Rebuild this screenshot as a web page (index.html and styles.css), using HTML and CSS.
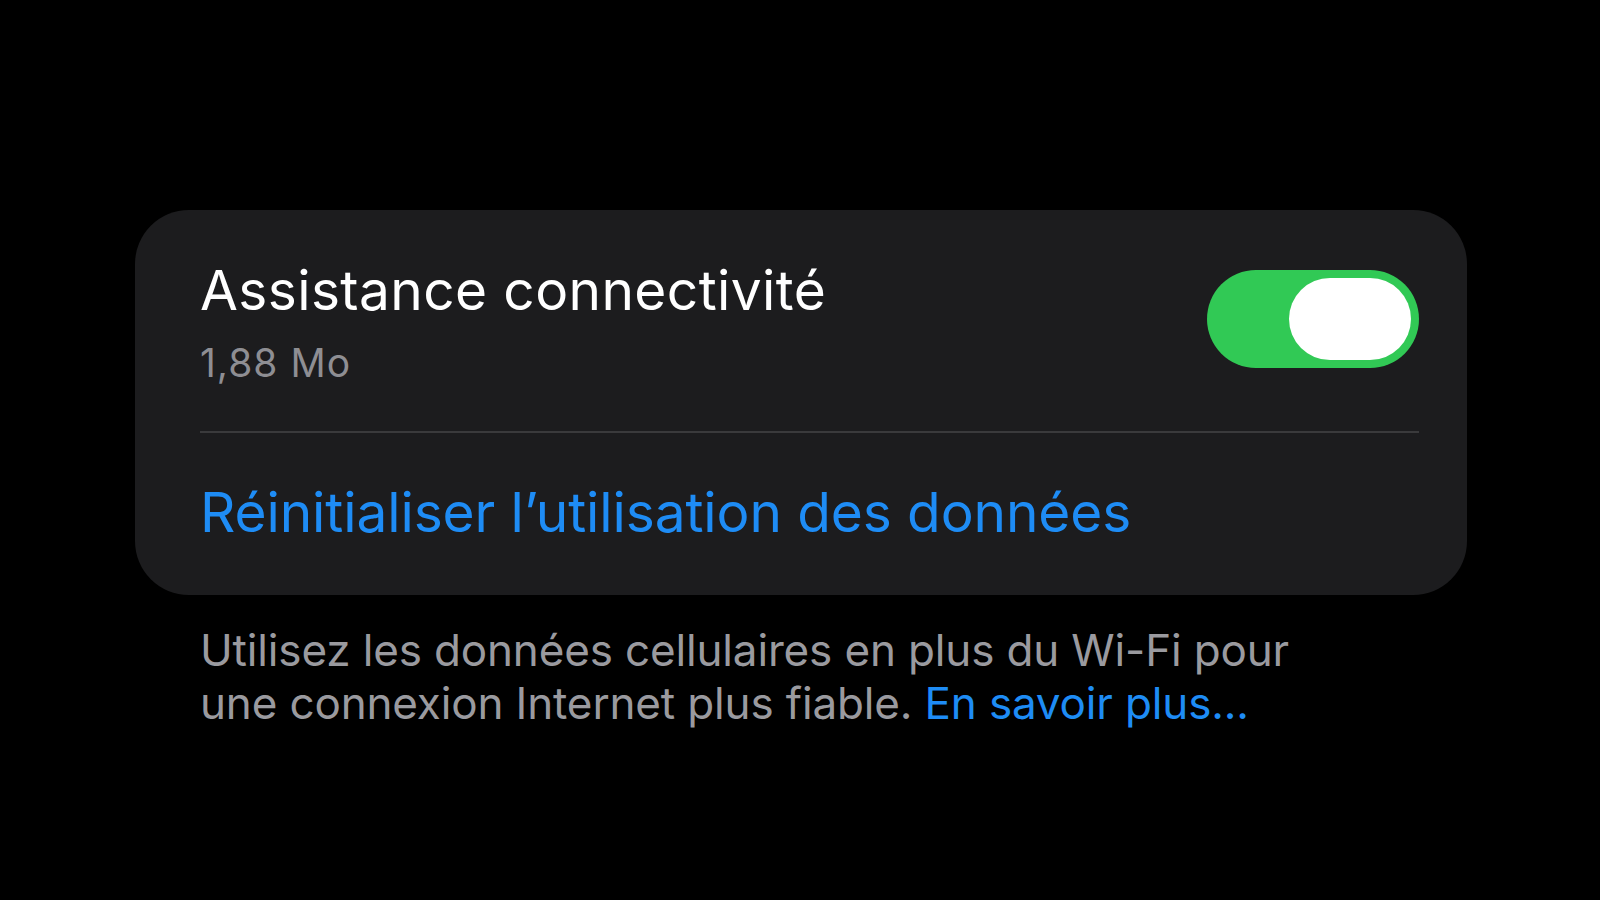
FILE: index.html
```html
<!DOCTYPE html>
<html lang="fr">
<head>
<meta charset="utf-8">
<title>Assistance connectivité</title>
<link rel="stylesheet" href="styles.css">
</head>
<body>
<main class="page">
  <section class="card">
    <div class="row-top">
      <div class="labels">
        <div class="title">Assistance connectivité</div>
        <div class="subtitle">1,88 Mo</div>
      </div>
      <div class="toggle" role="switch" aria-checked="true">
        <div class="knob"></div>
      </div>
    </div>
    <div class="divider"></div>
    <div class="row-link">
      <span class="link">Réinitialiser l’utilisation des données</span>
    </div>
  </section>
  <p class="footer">Utilisez les données cellulaires en plus du Wi-Fi pour<br>une connexion Internet plus fiable. <span class="footer-link">En savoir plus...</span></p>
</main>
</body>
</html>
```

FILE: styles.css
```css
html, body {
  margin: 0;
  padding: 0;
  background: #000;
  height: 100%;
}
body {
  font-family: Inter, "Noto Sans", "Liberation Sans", sans-serif;
  overflow: hidden;
}
.page {
  padding-top: 210px;
  padding-left: 135px;
  width: 1332px;
}
.card {
  background: #1c1c1e;
  border-radius: 54px;
  height: 385px;
  box-sizing: border-box;
  padding: 0 48px 0 65px;
  display: flex;
  flex-direction: column;
}
.row-top {
  display: flex;
  justify-content: space-between;
  align-items: flex-start;
  padding-top: 47px;
  padding-bottom: 45px;
}
.title {
  color: #fff;
  font-size: 55px;
  line-height: 66px;
  font-weight: 400;
  letter-spacing: 0.4px;
}
.subtitle {
  color: #8e8e93;
  font-size: 39px;
  line-height: 46px;
  margin-top: 17px;
  letter-spacing: 1px;
}
.toggle {
  width: 212px;
  height: 98px;
  margin-top: 13px;
  border-radius: 49px;
  background: #31c955;
  display: flex;
  justify-content: flex-end;
  align-items: center;
  padding-right: 8px;
  box-sizing: border-box;
}
.knob {
  width: 122px;
  height: 82px;
  border-radius: 41px;
  background: #fff;
}
.divider {
  height: 2px;
  background: #3a3a3c;
}
.row-link {
  padding-top: 46px;
}
.link {
  color: #1e8cf5;
  font-size: 55px;
  line-height: 66px;
  letter-spacing: -0.1px;
}
.footer {
  margin: 29px 0 0 0;
  padding-left: 65px;
  color: #9a9a9f;
  font-size: 44px;
  line-height: 53px;
  letter-spacing: -0.15px;
}
.footer-link {
  color: #1e8cf5;
}
```
